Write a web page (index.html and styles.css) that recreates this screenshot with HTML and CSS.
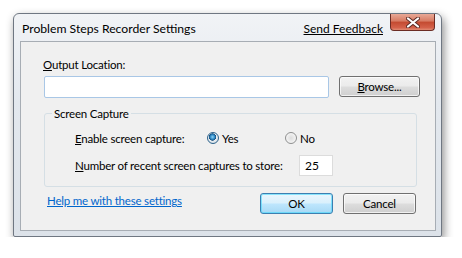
FILE: index.html
```html
<!DOCTYPE html>
<html lang="en">
<head>
    <meta charset="UTF-8">
    <title>Problem Steps Recorder Settings</title>
    <link rel="stylesheet" href="styles.css">
</head>
<body>

<div class="window">
    <!-- Title bar -->
    <div class="titlebar">
        <span class="title">Problem Steps Recorder Settings</span>
        <a class="feedback" href="#">Send Feedback</a>
        <div class="close-btn">
            <svg width="14" height="11" viewBox="0 0 14 11">
                <path d="M2 1.5 L12 9.5 M12 1.5 L2 9.5" stroke="#5a2a24" stroke-width="4" stroke-linecap="round"/>
                <path d="M2 1.5 L12 9.5 M12 1.5 L2 9.5" stroke="#ffffff" stroke-width="2.2" stroke-linecap="round"/>
            </svg>
        </div>
    </div>

    <!-- Dialog body -->
    <div class="content">
        <label class="field-label" for="output-location"><u>O</u>utput Location:</label>
        <div class="location-row">
            <input type="text" id="output-location" class="textbox textbox-location">
            <button class="btn btn-browse"><u>B</u>rowse...</button>
        </div>

        <div class="groupbox">
            <span class="legend">Screen Capture</span>
            <div class="group-row row-enable">
                <span class="row-label"><u>E</u>nable screen capture:</span>
                <span class="radio-option option-yes"><span class="radio checked"></span>Yes</span>
                <span class="radio-option"><span class="radio"></span>No</span>
            </div>
            <div class="group-row row-count">
                <span class="row-label row-label-wide"><u>N</u>umber of recent screen captures to store:</span>
                <input type="text" class="textbox textbox-count" value="25">
            </div>
        </div>

        <div class="footer">
            <a class="help-link" href="#">Help me with these settings</a>
            <button class="btn btn-default">OK</button>
            <button class="btn btn-cancel">Cancel</button>
        </div>
    </div>
</div>

</body>
</html>
```

FILE: styles.css
```css
body {
    margin: 0;
    padding: 13px 0 0 13px;
    background-color: #ffffff;
    font-family: Lato, 'Open Sans', sans-serif;
    font-size: 11.5px;
    letter-spacing: -0.2px;
    color: #000000;
}

/* Window frame */
.window {
    width: 427px;
    height: 222px;
    border: 1px solid #6f7782;
    border-radius: 6px 6px 2px 2px;
    background: linear-gradient(#f1f3f6, #e3e8ee 40%, #dce2e9);
    box-shadow: 2px 4px 10px rgba(0, 0, 0, 0.45);
    display: flex;
    flex-direction: column;
}

.titlebar {
    height: 27px;
    display: flex;
    align-items: flex-start;
    padding: 0 6px 0 8px;
    white-space: nowrap;
    letter-spacing: 0;
}

.title {
    line-height: 17px;
    padding-top: 6px;
    font-size: 12.2px;
}

.feedback {
    margin-left: auto;
    margin-right: 7px;
    line-height: 17px;
    padding-top: 6px;
    font-size: 12px;
    color: #000000;
    text-decoration: underline;
}

.close-btn {
    width: 43px;
    height: 16px;
    border: 1px solid #6b2c24;
    border-top: none;
    border-radius: 0 0 4px 4px;
    background: linear-gradient(#e8a896, #d77a62 45%, #c34a30 50%, #d4614a 85%, #e18c74);
    display: flex;
    align-items: center;
    justify-content: center;
}

/* Dialog content panel */
.content {
    width: 414px;
    height: 188px;
    margin-left: 6px;
    border: 1px solid #a7adb4;
    background-color: #f0f0f0;
    display: flex;
    flex-direction: column;
    white-space: nowrap;
}

.field-label {
    margin: 15px 0 0 22px;
    line-height: 15px;
}

.location-row {
    display: flex;
    align-items: flex-start;
    gap: 10px;
    margin: 4px 0 0 23px;
}

.textbox {
    box-sizing: border-box;
    margin: 0;
    padding: 0 4px;
    font-family: inherit;
    font-size: 12px;
    background-color: #ffffff;
    outline: none;
}

.textbox-location {
    width: 285px;
    height: 22px;
    border: 1px solid #a9c7e6;
    border-radius: 2px;
}

.btn {
    box-sizing: border-box;
    height: 21px;
    padding: 0;
    font-family: inherit;
    font-size: 11.5px;
    letter-spacing: inherit;
    color: #000000;
    border: 1px solid #707070;
    border-radius: 3px;
    background: linear-gradient(#f2f2f2, #ebebeb 48%, #dddddd 52%, #cfcfcf);
    box-shadow: inset 0 0 0 1px rgba(255, 255, 255, 0.7);
}

.btn-browse {
    width: 81px;
}

/* Screen Capture group */
.groupbox {
    box-sizing: border-box;
    width: 373px;
    height: 74px;
    margin: 15px 0 0 23px;
    border: 1px solid #d5dfe5;
    border-radius: 3px;
    display: flex;
    flex-direction: column;
}

.legend {
    align-self: flex-start;
    margin: -8px 0 0 7px;
    padding: 0 2px;
    line-height: 15px;
    background-color: #f0f0f0;
}

.group-row {
    display: flex;
    align-items: center;
    margin-left: 30px;
}

.row-enable {
    height: 20px;
    margin-top: 7px;
}

.row-count {
    height: 21px;
    margin-top: 7px;
}

.row-label {
    width: 132px;
}

.row-label-wide {
    width: 224px;
}

.radio-option {
    display: flex;
    align-items: center;
    gap: 3px;
}

.option-yes {
    width: 78px;
}

.radio {
    box-sizing: border-box;
    width: 12px;
    height: 12px;
    border: 1px solid #8e8f8f;
    border-radius: 50%;
    background: radial-gradient(circle at 50% 50%, #dcdcdc 0%, #f4f4f4 70%);
}

.radio.checked {
    border-color: #2c628b;
    background: radial-gradient(circle at 45% 40%, #8fd4f5 0%, #2b86c3 28%, #174f7e 42%, #e9eef2 48%, #c8d2da 100%);
}

.textbox-count {
    width: 34px;
    height: 21px;
    border: 1px solid #dcdcdc;
    padding: 0 5px;
}

/* Footer row */
.footer {
    display: flex;
    align-items: flex-start;
    margin: 6px 0 0 26px;
}

.help-link {
    line-height: 15px;
    color: #0066cc;
    text-decoration: underline;
}

.btn-default {
    width: 73px;
    margin-left: auto;
    border-color: #3c7fb1;
    background: linear-gradient(#eaf6fd, #d9f0fc 48%, #bee6fd 52%, #a7d9f5);
    box-shadow: inset 0 0 0 1px rgba(72, 216, 251, 0.6);
}

.btn-cancel {
    width: 73px;
    margin: 0 19px 0 10px;
}
```
